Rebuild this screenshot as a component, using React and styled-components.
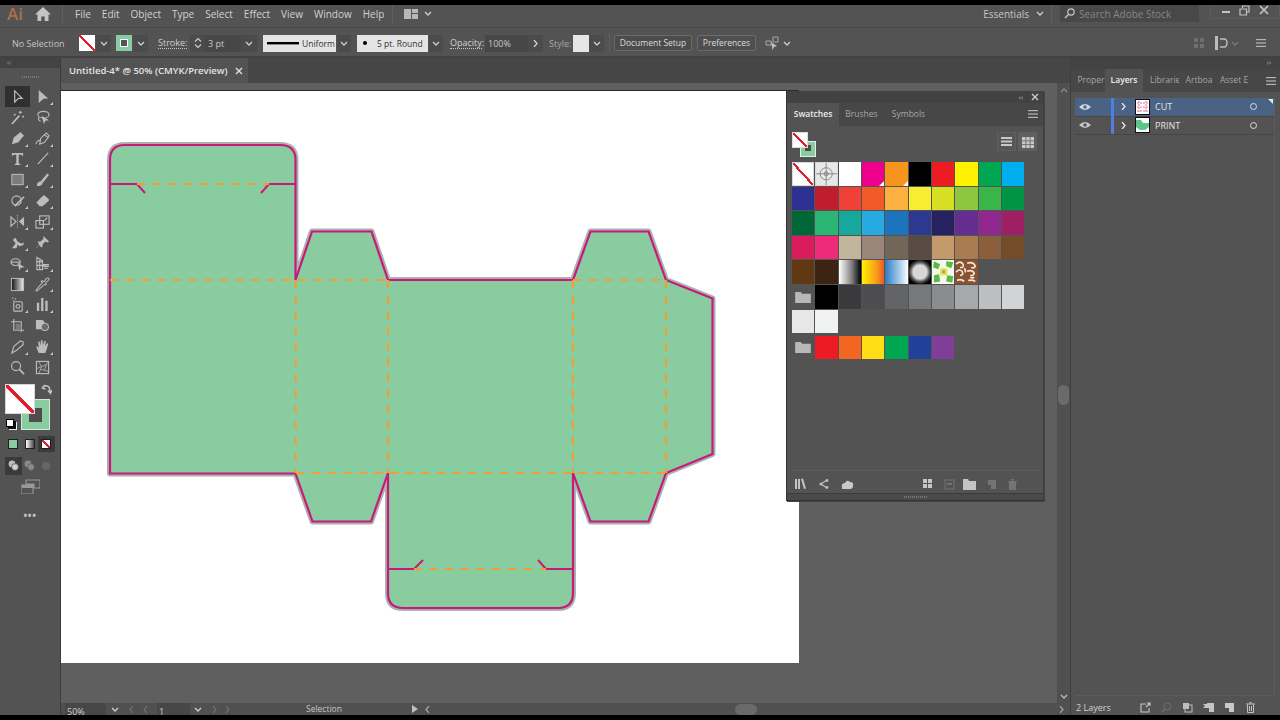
import styled, { createGlobalStyle } from "styled-components";

const GlobalStyle = createGlobalStyle`
  html, body { margin: 0; padding: 0; background: #000; overflow: hidden; }
  * { box-sizing: border-box; }
`

const noneBg = "linear-gradient(to top right, #fff calc(50% - 1.1px), #e0202c calc(50% - 1.1px) calc(50% + 1.1px), #fff calc(50% + 1.1px))"
const noneBgLarge = "linear-gradient(to top right, #fff calc(50% - 1.6px), #e0202c calc(50% - 1.6px) calc(50% + 1.6px), #fff calc(50% + 1.6px))"

const Screen = styled.div`
  width: 1280px;
  height: 720px;
  padding: 5px 0;
  display: flex;
  flex-direction: column;
  background: #000;
  overflow: hidden;
  font-family: "Open Sans", "Noto Sans", sans-serif;
  font-size: 10px;
  color: #cfcfcf;
`
const MenuBar = styled.div`
  height: 23px;
  display: flex;
  align-items: center;
  background: #535353;
  border-bottom: 1px solid #4a4a4a;
  padding-bottom: 5px;
  flex: none;
`
const AiLogo = styled.span`
  width: 35px;
  padding-left: 7px;
  font-size: 17px;
  font-weight: 600;
  color: #a9704a;
`
const MenuList = styled.div`
  display: flex;
  gap: 11px;
  margin-left: 12px;
  font-size: 10px;
  color: #d2d2d2;
`
const Divider = styled.span`
  width: 1px;
  height: ${(p) => p.$h || 18}px;
  background: #5f5f5f;
  margin-left: ${(p) => p.$ml || 0}px;
  flex: none;
`
const Push = styled.span`
  flex: 1;
`
const SearchBox = styled.div`
  width: 139px;
  height: 17px;
  margin-left: 8px;
  display: flex;
  align-items: center;
  gap: 3px;
  padding-left: 3px;
  background: #484848;
  color: #868686;
  font-size: 10px;
`
const WinButtons = styled.div`
  width: 70px;
  margin-left: 11px;
  align-self: flex-start;
  height: 14px;
  display: flex;
  align-items: center;
  justify-content: space-around;
  padding: 0 6px 3px;
  border: 1px solid #5c5c5c;
  border-top: 0;
`
const ControlBar = styled.div`
  height: 30px;
  flex: none;
  display: flex;
  align-items: center;
  background: #535353;
  border-bottom: 2px solid #414141;
  padding-top: 2px;
`
const Label = styled.span`
  margin-left: ${(p) => p.$ml || 0}px;
  margin-right: ${(p) => p.$mr || 0}px;
  padding-top: ${(p) => p.$pt || 0}px;
  width: ${(p) => (p.$w ? `${p.$w}px` : "auto")};
  color: ${(p) => p.$color || "#c4c4c4"};
  font-size: ${(p) => p.$size || 9.5}px;
  flex: none;
  white-space: nowrap;
`
const DottedLabel = styled(Label)`
  border-bottom: 1px dotted #c4c4c4;
  line-height: 11px;
  color: #d0d0d0;
`
const NoneBox = styled.span`
  width: 16px;
  height: 16px;
  margin-left: ${(p) => p.$ml || 0}px;
  background: ${noneBg};
  flex: none;
`
const StrokeBox = styled.span`
  width: 16px;
  height: 16px;
  margin-left: ${(p) => p.$ml || 0}px;
  background: #88cc9f;
  display: flex;
  align-items: center;
  justify-content: center;
  flex: none;
  &::after {
    content: "";
    width: 6px;
    height: 6px;
    border: 1px solid #fff;
    background: #555;
  }
`
const ChevBox = styled.span`
  width: ${(p) => p.$w || 15}px;
  height: 17px;
  margin-left: ${(p) => p.$ml || 0}px;
  background: #4b4b4b;
  display: flex;
  align-items: center;
  justify-content: center;
  flex: none;
`
const DarkField = styled.span`
  width: ${(p) => p.$w}px;
  height: 17px;
  margin-left: ${(p) => p.$ml || 0}px;
  background: #474747;
  color: #c8c8c8;
  font-size: 9px;
  line-height: 17px;
  padding-left: 3px;
  flex: none;
`
const LightField = styled.span`
  width: ${(p) => p.$w}px;
  height: 17px;
  margin-left: ${(p) => p.$ml || 0}px;
  background: #e4e4e4;
  color: #333;
  font-size: 8.5px;
  display: flex;
  align-items: center;
  gap: 3px;
  padding-left: ${(p) => p.$pad || 5}px;
  flex: none;
`
const StyleChip = styled.span`
  width: 16px;
  height: 17px;
  margin-left: 5px;
  background: #e6e6e6;
  flex: none;
`
const TextButton = styled.span`
  width: ${(p) => p.$w}px;
  height: 16px;
  margin-left: ${(p) => p.$ml || 0}px;
  border: 1px solid #6a6a6a;
  border-radius: 2px;
  background: ${(p) => p.$bg || "transparent"};
  color: #dcdcdc;
  font-size: 8.5px;
  line-height: 14px;
  text-align: center;
  flex: none;
`
const Workspace = styled.div`
  flex: 1;
  min-height: 0;
  display: flex;
`
const ToolPanel = styled.div`
  width: 61px;
  flex: none;
  background: #535353;
  border-right: 1px solid #3c3c3c;
  display: flex;
  flex-direction: column;
`
const ToolHead = styled.div`
  height: 10px;
  background: #434343;
  color: #a8a8a8;
  font-size: 7px;
  line-height: 9px;
  padding-left: 7px;
`
const Grip = styled.div`
  height: 18px;
  display: flex;
  justify-content: center;
  align-items: center;
  gap: 1px;
  & i {
    width: 1px;
    height: 2px;
    background: #7a7a7a;
  }
`
const ToolGrid = styled.div`
  display: grid;
  grid-template-columns: 25px 25px;
  grid-auto-rows: 20.85px;
  padding-left: 5px;
`
const ToolCell = styled.div`
  position: relative;
  display: flex;
  align-items: center;
  justify-content: center;
  background: ${(p) => (p.$active ? "#303030" : "transparent")};
  &::after {
    content: ${(p) => (p.$fly ? '""' : "none")};
    position: absolute;
    right: 2px;
    bottom: 2px;
    border-style: solid;
    border-width: 0 0 3px 3px;
    border-color: transparent transparent #c8c8c8 transparent;
  }
`
const ColorWell = styled.div`
  position: relative;
  height: 50px;
  margin-top: 6px;
  flex: none;
`
const FillSquare = styled.span`
  position: absolute;
  z-index: 1;
  left: 5px;
  top: 0;
  width: 30px;
  height: 30px;
  border: 1px solid #d8d8d8;
  background: ${noneBgLarge};
`
const StrokeSquare = styled.span`
  position: absolute;
  left: 21px;
  top: 15px;
  width: 29px;
  height: 31px;
  background: #88cc9f;
  border: 1px solid #d8e8dc;
  &::after {
    content: "";
    position: absolute;
    left: 7px;
    top: 8px;
    width: 13px;
    height: 14px;
    background: #4d4d4d;
  }
`
const SwapIcon = styled.span`
  position: absolute;
  left: 41px;
  top: 0;
`
const DefaultIcon = styled.span`
  position: absolute;
  left: 6px;
  top: 35px;
  width: 8px;
  height: 8px;
  background: #fff;
  border: 1px solid #000;
  box-shadow: 2px 2px 0 0 #111, 3px 3px 0 0 #eee;
`
const ModeRow = styled.div`
  display: flex;
  padding-left: 5px;
  height: ${(p) => p.$h || 20}px;
  margin-top: ${(p) => p.$mt || 0}px;
  align-items: center;
  flex: none;
`
const ModeCell = styled.span`
  width: 16.5px;
  height: ${(p) => p.$h || 16}px;
  display: flex;
  align-items: center;
  justify-content: center;
  background: ${(p) => (p.$on ? "#3a3a3a" : "transparent")};
`
const ModeChip = styled.span`
  width: 10px;
  height: 10px;
  border: 1px solid #1f1f1f;
  background: ${(p) => p.$bg};
`
const Center = styled.div`
  height: ${(p) => p.$h}px;
  margin-top: ${(p) => p.$mt || 0}px;
  display: flex;
  align-items: center;
  justify-content: center;
  color: #c0c0c0;
  font-size: 10px;
  font-weight: 700;
  letter-spacing: 0.5px;
  flex: none;
`
const DocArea = styled.div`
  flex: 1;
  min-width: 0;
  display: flex;
  flex-direction: column;
`
const TabRow = styled.div`
  height: 25px;
  flex: none;
  background: #464646;
  display: flex;
`
const DocTab = styled.div`
  width: 187px;
  background: #535353;
  display: flex;
  align-items: center;
  justify-content: space-between;
  padding: 0 5px 0 8px;
  color: #e4e4e4;
  font-size: 9.5px;
  font-weight: 600;
`
const CanvasRow = styled.div`
  flex: 1;
  min-height: 0;
  display: flex;
`
const Canvas = styled.div`
  flex: 1;
  position: relative;
  background: #5f5f5f;
  padding-top: 8px;
  overflow: hidden;
`
const Artboard = styled.svg`
  display: block;
  width: 738px;
  height: 572px;
  background: #fff;
  box-shadow: 0 -1px 0 #2c2c2c;
`
const VScroll = styled.div`
  width: 13px;
  flex: none;
  background: #505050;
  display: flex;
  flex-direction: column;
  align-items: center;
  justify-content: space-between;
  padding: 5px 0 4px;
  position: relative;
`
const VThumb = styled.span`
  position: absolute;
  left: 1px;
  top: 302px;
  width: 11px;
  height: 20px;
  border-radius: 6px;
  background: #6a6a6a;
`
const StatusBar = styled.div`
  height: 12px;
  flex: none;
  background: #505050;
  display: flex;
  align-items: flex-start;
  position: relative;
  overflow: hidden;
`
const StatusField = styled.span`
  width: ${(p) => p.$w}px;
  height: 16px;
  margin-left: ${(p) => p.$ml || 0}px;
  background: #474747;
  color: #cfcfcf;
  font-size: 9px;
  line-height: 17px;
  padding-left: 2px;
  flex: none;
`
const StatusIcon = styled.span`
  margin-left: ${(p) => p.$ml || 0}px;
  margin-right: ${(p) => p.$mr || 0}px;
  width: ${(p) => p.$w || 9}px;
  height: 12px;
  display: flex;
  align-items: center;
  justify-content: center;
  flex: none;
`
const HThumb = styled.span`
  position: absolute;
  left: 674px;
  top: 1px;
  width: 22px;
  height: 11px;
  border-radius: 6px;
  background: #6a6a6a;
`
const FloatPanel = styled.div`
  position: absolute;
  left: 725px;
  top: 8px;
  width: 258px;
  height: 410px;
  background: #535353;
  border-left: 1px solid #333;
  border-right: 1px solid #3e3e3e;
  border-bottom: 1px solid #333;
  display: flex;
  flex-direction: column;
  box-shadow: 1px 1px 0 #444;
`
const FloatHead = styled.div`
  height: 12px;
  flex: none;
  background: #424242;
  display: flex;
  align-items: center;
  justify-content: flex-end;
  gap: 8px;
  padding-right: 4px;
  color: #c0c0c0;
  font-size: 7px;
`
const FloatTabs = styled.div`
  height: 23px;
  flex: none;
  background: #474747;
  display: flex;
  align-items: stretch;
  padding-right: 5px;
`
const PanelTab = styled.span`
  width: ${(p) => p.$w}px;
  margin-left: ${(p) => p.$ml || 0}px;
  text-align: center;
  line-height: 22px;
  font-size: 8.5px;
  background: ${(p) => (p.$on ? "#535353" : "transparent")};
  color: ${(p) => (p.$on ? "#ececec" : "#a6a6a6")};
  font-weight: ${(p) => (p.$on ? 600 : 400)};
  white-space: nowrap;
  overflow: hidden;
  flex: none;
`
const FillStrokeMini = styled.div`
  position: relative;
  width: 26px;
  height: 30px;
`
const MiniFill = styled.span`
  position: absolute;
  z-index: 1;
  left: 0;
  top: 0;
  width: 16px;
  height: 16px;
  background: ${noneBg};
  border: 1px solid #ddd;
`
const MiniStroke = styled.span`
  position: absolute;
  left: 8px;
  top: 9px;
  width: 16px;
  height: 16px;
  background: #88cc9f;
  border: 1px solid #e4efe7;
  &::after {
    content: "";
    position: absolute;
    left: 4px;
    top: 3px;
    width: 6px;
    height: 6px;
    background: #4b4b4b;
  }
`
const SwatchTop = styled.div`
  height: 36px;
  flex: none;
  display: flex;
  align-items: flex-start;
  justify-content: space-between;
  padding: 6px 6px 0 5px;
`
const ViewButtons = styled.div`
  display: flex;
  gap: 2px;
`
const ViewButton = styled.span`
  width: 19px;
  height: 19px;
  background: ${(p) => (p.$on ? "#5f5f5f" : "#565656")};
  border: 1px solid #5f5f5f;
  display: flex;
  align-items: center;
  justify-content: center;
`
const SwatchGrid = styled.div`
  display: grid;
  grid-template-columns: repeat(10, 22.33px);
  grid-auto-rows: 23.6px;
  gap: 1px;
  margin-left: 5px;
`
const GroupGrid = styled(SwatchGrid)`
  margin-top: 2.5px;
`
const Swatch = styled.span`
  background: ${(p) => p.$bg};
  outline: ${(p) => (p.$sel ? "1px solid #d8d8d8" : "none")};
  outline-offset: -1px;
  position: relative;
  overflow: hidden;
  &::after {
    content: ${(p) => (p.$corner ? '""' : "none")};
    position: absolute;
    right: 0;
    bottom: 0;
    border-style: solid;
    border-width: 0 0 5px 5px;
    border-color: transparent transparent #fff transparent;
  }
`
const SwatchSvg = styled.svg`
  display: block;
  width: 100%;
  height: 100%;
`
const FolderCell = styled.span`
  grid-column-start: 1;
  display: flex;
  align-items: center;
  justify-content: center;
`
const FloatFoot = styled.div`
  margin-top: auto;
  height: 23px;
  flex: none;
  margin-left: 5px;
  margin-right: 3px;
  border-top: 1px solid #5b5b5b;
  display: flex;
  align-items: center;
  padding: 4px 4px 0 2px;
`
const FootIcon = styled.span`
  margin-left: ${(p) => p.$ml || 0}px;
  width: ${(p) => p.$w || 14}px;
  display: flex;
  justify-content: center;
  flex: none;
`
const FloatGrip = styled.div`
  height: 7px;
  flex: none;
  background: #4a4a4a;
  border-top: 1px solid #3c3c3c;
  display: flex;
  justify-content: center;
  gap: 1px;
  padding-top: 2px;
  & i {
    width: 1px;
    height: 2px;
    background: #777;
  }
`
const Dock = styled.div`
  width: 210px;
  flex: none;
  border-left: 1px solid #3e3e3e;
  background: #535353;
  display: flex;
  flex-direction: column;
`
const DockHead = styled.div`
  height: 11px;
  flex: none;
  background: #434343;
  color: #b8b8b8;
  font-size: 7px;
  line-height: 10px;
  text-align: right;
  padding-right: 9px;
`
const DockTabs = styled.div`
  height: 23px;
  flex: none;
  background: #474747;
  display: flex;
  padding-left: 6px;
  align-items: stretch;
  position: relative;
`
const MenuBurger = styled.span`
  position: absolute;
  right: 4px;
  top: 7px;
`
const LayerFrame = styled.div`
  flex: 1;
  margin: 6px 5px 3px 4px;
  border-bottom: 1px solid #5c5c5c;
  border-right: 1px solid #5c5c5c;
`
const LayerRow = styled.div`
  position: relative;
  height: 18.5px;
  display: flex;
  align-items: center;
  background: ${(p) => (p.$on ? "#4a6384" : "transparent")};
  border-bottom: 1px solid #464646;
  color: #e4e4e4;
  font-size: 9px;
  &::after {
    content: ${(p) => (p.$on ? '""' : "none")};
    position: absolute;
    right: 1px;
    top: 1px;
    border-style: solid;
    border-width: 0 5px 5px 0;
    border-color: transparent #e8e8e8 transparent transparent;
  }
`
const EyeSlot = styled.span`
  width: 36px;
  padding-left: 3px;
  display: flex;
  justify-content: center;
  padding-right: 20px;
  flex: none;
`
const ColorTag = styled.span`
  width: 2.5px;
  height: 18px;
  background: #4f7de0;
  flex: none;
`
const ArrowSlot = styled.span`
  width: 21.5px;
  display: flex;
  justify-content: center;
  flex: none;
`
const Thumb = styled.span`
  width: 15px;
  height: 16px;
  border: 1px solid #111;
  background: #fff;
  margin-right: 5px;
  flex: none;
`
const LayerName = styled.span`
  flex: 1;
`
const LayerTarget = styled.span`
  width: 7px;
  height: 7px;
  border: 1px solid #ddd;
  border-radius: 50%;
  margin-right: 17px;
  flex: none;
`
const DockFoot = styled.div`
  height: 16px;
  flex: none;
  display: flex;
  align-items: center;
  padding-left: 5px;
  color: #d0d0d0;
  font-size: 9px;
`
const GlyphSvg = styled.svg`
  display: block;
  flex: none;
`

const Glyph = ({ s = 16, w, h, children, box = "0 0 16 16", c = "#bcbcbc" }) => (
  <GlyphSvg width={w || s} height={h || s} viewBox={box} fill={c} stroke="none">
    {children}
  </GlyphSvg>
)

const Chev = ({ dir = "down", c = "#cfcfcf" }) => {
  const points = { down: "1,1 4,4 7,1", right: "1,0 4,3.5 1,7", left: "4,0 1,3.5 4,7", up: "1,4 4,1 7,4" }[dir]
  const vertical = dir === "down" || dir === "up"
  return (
    <GlyphSvg width="8" height={vertical ? 5 : 7} viewBox={vertical ? "0 0 8 5" : "0 0 6 7"} fill="none" stroke={c} strokeWidth="1.3">
      <polyline points={points} />
    </GlyphSvg>
  )
}

const Burger = () => (
  <Glyph s={10} box="0 0 10 10" c="#b5b5b5">
    <rect y="1" width="10" height="1.2" />
    <rect y="4.4" width="10" height="1.2" />
    <rect y="7.8" width="10" height="1.2" />
  </Glyph>
)

const line = { fill: "none", stroke: "#bcbcbc", strokeWidth: 1.2 }

const tools = [
  { active: true, g: <path d="M5 2 L13 10 L9 10 L5 14 Z" fill="none" stroke="#c4c4c4" strokeWidth="1.2" /> },
  { fly: true, g: <path d="M4 1 L14 10 L9 10.5 L4 15 Z" /> },
  { g: <g><path d="M2 15 L10 6" {...line} strokeWidth="1.8" /><path d="M11 1v3M9.5 2.5h3M14 6v2M13 7h2M5 4v2M4 5h2" {...line} /></g> },
  { g: <g><ellipse cx="9" cy="5" rx="6" ry="3.6" {...line} /><path d="M7 6 L15 11 L11 11.5 L9.5 15 Z" /><path d="M4 8 q-1 3 2 4" {...line} /></g> },
  { fly: true, g: <path d="M2 14 L4 7 L9 3 L13 7 L9 12 Z M9 3 L11 1 L15 5 L13 7 Z" /> },
  { fly: true, g: <g><path d="M1 14 q2 -6 5 -3" {...line} /><path d="M5 14 L6 8 L10 4 L14 7 L10 12 Z M10 4 L12 2 L15 5 L14 7 Z" fill="none" stroke="#bcbcbc" strokeWidth="1.1" /></g> },
  { fly: true, g: <path d="M2 2 H14 V5 H13 L12 4 H9.3 V13 L11 14 V15 H5 V14 L6.7 13 V4 H4 L3 5 H2 Z" /> },
  { fly: true, g: <path d="M3 14 L14 2" {...line} /> },
  { fly: true, g: <rect x="2" y="2.5" width="12" height="11" fill="#7c7c7c" stroke="#bcbcbc" strokeWidth="1.1" /> },
  { fly: true, g: <path d="M2 15 C2 11 4 10 6 10 L13 1.5 L15 3 L8 12 C8 14 6 15 2 15 Z" /> },
  { fly: true, g: <g><circle cx="7" cy="8" r="5" {...line} /><path d="M5 14 L15 4" {...line} strokeWidth="1.8" /></g> },
  { fly: true, g: <path d="M1.5 10 L8.5 3 Q9.5 2 10.5 3 L14.5 6.5 Q15.5 7.5 14.5 8.5 L8 14 H5 Z" /> },
  { fly: true, g: <g><path d="M1 3 L6.5 8 L1 13 Z" {...line} /><path d="M15 3 L9.5 8 L15 13 Z" /><path d="M8 1v14" {...line} strokeDasharray="1.5 1" strokeWidth="0.8" /></g> },
  { fly: true, g: <g><rect x="1" y="7" width="8" height="8" {...line} /><rect x="5" y="2" width="10" height="9" {...line} /><path d="M10 7 L13 4" {...line} /></g> },
  { fly: true, g: <path d="M2 14 L6 9 L3 5 L6 3 L8 7 L12 9 L15 8 L14 11 L10 12 L8 10 L7 14 Z" /> },
  { g: <path d="M9 1 L15 7 L13 8 L11 7 L8 10 L8 13 L6.5 13 L4 10.5 L1.5 14.5 L1 14 L4.5 9.5 L3 8 L3 7 L6 7 L9 4 Z" /> },
  { fly: true, g: <g><ellipse cx="6" cy="6.5" rx="5" ry="3.6" {...line} /><path d="M1 6.5h10" {...line} /><path d="M8 7 L15.5 12 L11.5 12.5 L10 15.5 Z" /></g> },
  { fly: true, g: <path d="M2 1.5 L8 5 V9 H15 L8 10 V14.5 H2 Z M2 6h6M2 10h6M5 3v11M9 11h6M9 13h5" {...line} /> },
  { g: <g><defs><linearGradient id="gt" x1="0" x2="1"><stop offset="0" stopColor="#111" /><stop offset="1" stopColor="#eee" /></linearGradient></defs><rect x="1.5" y="1.5" width="13" height="13" fill="url(#gt)" stroke="#c0c0c0" /></g> },
  { fly: true, g: <path d="M2 15 L1 14 L8 6 L6.5 4.5 L8 4 L10 5 L12 1.5 Q14 0.5 15 2 Q15 3 11.5 6 L12 8 L11 8.5 L10 8 Z" fill="none" stroke="#bcbcbc" strokeWidth="1.1" /> },
  { fly: true, g: <g><rect x="4" y="5" width="9" height="10" rx="1" {...line} /><circle cx="8.5" cy="10" r="2" {...line} /><path d="M2 1h1.5M5 2h1.5M3 4h1.5" {...line} /></g> },
  { fly: true, g: <path d="M2 15 V6 H4.5 V15 Z M6.5 15 V1 H9 V15 Z M11 15 V4 H13.5 V15 Z M0.5 15.5 H15.5" /> },
  { g: <g><path d="M4 1 V13 H15 M1 4 H12 V15" {...line} /><path d="M6 6 H10 L12 8 V13 H6 Z" fill="#7c7c7c" /></g> },
  { g: <g><path d="M1 2 H8 L10 4 V12 H1 Z" /><circle cx="10.5" cy="9.5" r="4" fill="#6a6a6a" stroke="#c8c8c8" /></g> },
  { fly: true, g: <path d="M2 15 L4 8 L11 2 L14 3 L14 6 L7 12 Z M2 15 L7 12" {...line} /> },
  { fly: true, g: <path d="M4 15 L1.5 9 Q1 7.8 2.3 7.8 L4 9.5 L3.5 3 Q4 2 5 3 L6 7 L6.3 1.5 Q7.2 0.5 8 1.5 L8.5 7 L10 2 Q11 1.5 11.5 2.5 L10.8 7.5 L13 4.5 Q14 4.5 14 5.5 L12.5 11 L11 15 Z" /> },
  { g: <g><circle cx="6.5" cy="6.5" r="4.8" {...line} /><path d="M10 10 L15 15" {...line} strokeWidth="1.8" /></g> },
  { g: <g><rect x="1.5" y="1.5" width="13" height="13" {...line} /><path d="M4 2 L7 7 L2 9 M7 7 L12 5 L14 2 M12 5 L10 11 L14 12 M10 11 L6 10 L4 14 M7 7 L6 10" fill="none" stroke="#bcbcbc" strokeWidth="0.8" /></g> }
]

const swatchRows = [
  ["#2e3192", "#be1e2d", "#ef4136", "#f15a29", "#fbb040", "#f9ed32", "#d7df23", "#8dc63f", "#39b54a", "#009444"],
  ["#006838", "#2bb673", "#15a89d", "#27aae1", "#1c75bc", "#2b3990", "#262262", "#662d91", "#92278f", "#9e1f63"],
  ["#da1c5c", "#ee2a7b", "#c2b59b", "#9b8579", "#726658", "#594a42", "#c49a6c", "#a97c50", "#8b5e3c", "#754c29"]
]
const grays = ["#000000", "#3a3a3c", "#4d4d4f", "#636466", "#77787b", "#8a8c8e", "#a6a8ab", "#bcbec0", "#d1d3d4"]
const brights = ["#ed1c24", "#f26522", "#ffde17", "#00a651", "#21409a", "#7f3f98"]

const Folder = () => (
  <Glyph w={16} h={12} box="0 0 17 13" c="#b8b8b8">
    <path d="M0 1 H6 L7.5 3 H17 V13 H0 Z" />
  </Glyph>
)

const RegMark = () => (
  <SwatchSvg viewBox="0 0 22 23" fill="none" stroke="#777" strokeWidth="0.8">
    <circle cx="11" cy="11.5" r="6" />
    <circle cx="11" cy="11.5" r="2" />
    <path d="M0 11.5 H22 M11 0 V23" />
  </SwatchSvg>
)

const GreenPattern = () => (
  <SwatchSvg viewBox="0 0 22 23">
    <rect width="22" height="23" fill="#f4f8ea" />
    <path d="M2 1 L8 4 L6 9 L1 7 Z M14 1 L21 2 L19 8 L14 6 Z M2 15 L7 14 L8 21 L2 22 Z M15 15 L21 16 L20 22 L14 21 Z" fill="#58b947" />
    <path d="M8 8 L15 8 L15 15 L8 15 Z" fill="#f2dc55" />
    <path d="M10 10 L13 10 L13 13 L10 13 Z" fill="#7cc242" />
  </SwatchSvg>
)

const BrownPattern = () => (
  <SwatchSvg viewBox="0 0 22 23" fill="none" stroke="#f4e8dc" strokeWidth="1.6">
    <rect width="22" height="23" fill="#8a5230" stroke="none" />
    <path d="M1 4 q4 -4 7 0 q1 4 -3 3 M12 3 q6 -2 8 3 q-2 3 -4 1 M1 12 q3 -4 6 -1 q2 4 -2 4 M12 11 q5 -2 7 2 q-1 3 -4 2 M2 20 q4 -2 7 1 M13 20 q4 -1 7 1 M9 8 q2 2 1 4 M19 17 q-2 1 -4 0" />
  </SwatchSvg>
)

const PACK = "M110 160 Q110 145 125 145 L280 145 Q295.5 145 295.5 160 L295.5 280 L312 231.5 L371.5 231.5 L388 280 L573 280 L590.5 231.5 L648.5 231.5 L666 280 L712.5 298.5 L712.5 454 L666 473 L648.5 521.5 L590.5 521.5 L573 473 L573 593 Q573 608 558 608 L403 608 Q388 608 388 593 L388 473 L371 521.5 L312.5 521.5 L295.5 473.5 L110 473.5 Z"
const FOLDS = "M110 280 H388 M573 280 H666 M295.5 280 V473 M388 280 V473 M573 280 V473 M666 280 V473 M296 473 H666 M137 184 H269 M414 569 H546"
const SLITS = "M110 184 H137 L145 193 M295.5 184 H269 L261 193 M388 569 H414 L423 560 M573 569 H546 L538 560"

function App() {
  return (
    <Screen>
      <GlobalStyle />
      <MenuBar>
        <AiLogo>Ai</AiLogo>
        <Glyph s={16} c="#c4c4c4"><path d="M8 1 L16 8.5 H13.5 V15 H9.7 V10.5 H6.3 V15 H2.5 V8.5 H0 Z" /></Glyph>
        <Divider $h={18} $ml={11} />
        <MenuList>
          {["File", "Edit", "Object", "Type", "Select", "Effect", "View", "Window", "Help"].map((m) => (
            <span key={m}>{m}</span>
          ))}
        </MenuList>
        <Divider $h={18} $ml={8} />
        <Label $ml={11}>
          <Glyph w={14} h={10} box="0 0 14 10" c="#b8b8b8"><path d="M0 0 H7 V10 H0 Z M8 0 H14 V4 H8 Z M8 5 H14 V10 H8 Z" /></Glyph>
        </Label>
        <Label $ml={6}><Chev /></Label>
        <Push />
        <Label $size={10} $color="#c4c4c4">Essentials</Label>
        <Label $ml={7}><Chev /></Label>
        <Divider $h={18} $ml={7} />
        <SearchBox>
          <Glyph s={13} box="0 0 13 13"><circle cx="8" cy="5" r="3.2" fill="none" stroke="#c4c4c4" strokeWidth="1.2" /><path d="M5.5 7.5 L2 11" stroke="#c4c4c4" strokeWidth="1.4" /></Glyph>
          Search Adobe Stock
        </SearchBox>
        <WinButtons>
          <Glyph s={10} box="0 0 10 10" c="#c4c4c4"><rect x="1" y="6" width="8" height="2" /></Glyph>
          <Glyph s={11} box="0 0 11 11"><path d="M3.5 3 V1 H10 V7 H7.5 M1 4 H7.5 V10 H1 Z" fill="none" stroke="#c4c4c4" strokeWidth="1.2" /></Glyph>
          <Glyph s={10} box="0 0 10 10"><path d="M1 1 L9 9 M9 1 L1 9" stroke="#c4c4c4" strokeWidth="1.7" /></Glyph>
        </WinButtons>
      </MenuBar>

      <ControlBar>
        <Label $ml={12} $w={67} $size={9}>No Selection</Label>
        <NoneBox />
        <ChevBox $ml={1}><Chev /></ChevBox>
        <StrokeBox $ml={5} />
        <ChevBox $ml={1}><Chev /></ChevBox>
        <DottedLabel $ml={10} $w={29} $size={9}>Stroke:</DottedLabel>
        <ChevBox $w={15} $ml={3}>
          <Glyph s={12} box="0 0 12 12"><path d="M3 4.5 L6 1.5 L9 4.5 M3 7.5 L6 10.5 L9 7.5" fill="none" stroke="#cfcfcf" strokeWidth="1.1" /></Glyph>
        </ChevBox>
        <DarkField $w={36} $ml={0}>3 pt</DarkField>
        <ChevBox $w={16}><Chev /></ChevBox>
        <LightField $w={73} $ml={6} $pad={4}>
          <Glyph w={32} h={3} box="0 0 32 3" c="#000"><rect width="32" height="2.4" /></Glyph>
          Uniform
        </LightField>
        <ChevBox $w={14} $ml={1}><Chev /></ChevBox>
        <LightField $w={71} $ml={6} $pad={5}>
          <Glyph s={6} box="0 0 6 6" c="#000"><circle cx="3" cy="3" r="2" /></Glyph>
          <Label $ml={6} $color="#333" $size={8.5}>5 pt. Round</Label>
        </LightField>
        <ChevBox $w={14} $ml={1}><Chev /></ChevBox>
        <DottedLabel $ml={7} $w={32} $size={9}>Opacity:</DottedLabel>
        <DarkField $w={43} $ml={3}>100%</DarkField>
        <ChevBox $w={15}><Chev dir="right" /></ChevBox>
        <Label $ml={6} $w={19} $color="#a8a8a8" $size={9}>Style:</Label>
        <StyleChip />
        <ChevBox $w={15}><Chev /></ChevBox>
        <Divider $h={20} $ml={5} />
        <TextButton $w={78} $ml={4} $bg="#4c4c4c">Document Setup</TextButton>
        <TextButton $w={59} $ml={5} $bg="#4f4f4f">Preferences</TextButton>
        <Label $ml={9}>
          <Glyph s={15} box="0 0 15 15"><path d="M1 5 H6 V9 H1 Z M8 1 H13 V6 H8 Z" fill="none" stroke="#aaa" /><path d="M6 6 L12 10 L9 11 L7.5 14 Z" fill="#bdbdbd" /></Glyph>
        </Label>
        <Label $ml={3}><Chev /></Label>
        <Push />
        <Glyph s={12} box="0 0 12 12" c="#6f6f6f"><path d="M1 1 H5 V5 H1 Z M7 1 H11 V5 H7 Z M1 7 H5 V11 H1 Z M7 7 H11 V11 H7 Z" /></Glyph>
        <Label $ml={9}>
          <Glyph s={14} box="0 0 14 14" c="#bdbdbd"><path d="M1 0 H4 V14 H1 Z" /><path d="M6 3 H10 Q13 3 13 7 Q13 11 10 11 H6" fill="none" stroke="#bdbdbd" strokeWidth="1.4" /></Glyph>
        </Label>
        <Label $ml={3}><Chev c="#7a7a7a" /></Label>
        <Label $ml={17} $mr={14}><Burger /></Label>
      </ControlBar>

      <Workspace>
        <ToolPanel>
          <ToolHead>‹‹</ToolHead>
          <Grip>{Array.from({ length: 9 }, (_, i) => <i key={i} />)}</Grip>
          <ToolGrid>
            {tools.map((t, i) => (
              <ToolCell key={i} $active={t.active} $fly={t.fly}>
                <Glyph s={15}>{t.g}</Glyph>
              </ToolCell>
            ))}
          </ToolGrid>
          <ColorWell>
            <StrokeSquare />
            <FillSquare />
            <SwapIcon>
              <Glyph s={11} box="0 0 11 11"><path d="M1 4 Q4 0 8 3 L9.5 8 M7 6.5 L9.5 9.5 L11 6 M1 4 L4 1 M1 4 L4.5 5" fill="none" stroke="#c4c4c4" strokeWidth="1.4" /></Glyph>
            </SwapIcon>
            <DefaultIcon />
          </ColorWell>
          <ModeRow $mt={0}>
            <ModeCell><ModeChip $bg="#88cc9f" /></ModeCell>
            <ModeCell><ModeChip $bg="linear-gradient(90deg,#fff,#444)" /></ModeCell>
            <ModeCell $on><ModeChip $bg={noneBg} /></ModeCell>
          </ModeRow>
          <ModeRow $h={20} $mt={2}>
            <ModeCell $on $h={18}><Glyph s={11} box="0 0 11 11"><circle cx="4" cy="4" r="3.4" /><circle cx="7" cy="7" r="3.4" fill="#d0d0d0" stroke="#444" strokeWidth="0.7" /></Glyph></ModeCell>
            <ModeCell $h={18}><Glyph s={11} box="0 0 11 11" c="#8a8a8a"><circle cx="4" cy="4" r="3.4" /><circle cx="7" cy="7" r="3.4" fill="#8a8a8a" stroke="#555" strokeWidth="0.7" /></Glyph></ModeCell>
            <ModeCell $h={18}><Glyph s={10} box="0 0 11 11" c="#666"><circle cx="5.5" cy="5.5" r="4.5" /></Glyph></ModeCell>
          </ModeRow>
          <Center $h={18} $mt={2}>
            <Glyph w={19} h={15} box="0 0 19 15" c="#9a9a9a"><path d="M5 1 H19 V9 H13 V5 H5 Z M0 6 H12 V15 H0 Z" fill="none" stroke="#9a9a9a" strokeWidth="1.1" /><path d="M1 6 H12 V9 H1 Z" /></Glyph>
          </Center>
          <Center $h={14} $mt={12}>•••</Center>
        </ToolPanel>

        <DocArea>
          <TabRow>
            <DocTab>
              Untitled-4* @ 50% (CMYK/Preview)
              <Glyph s={8} box="0 0 8 8"><path d="M1 1 L7 7 M7 1 L1 7" stroke="#e0e0e0" strokeWidth="1.4" /></Glyph>
            </DocTab>
          </TabRow>
          <CanvasRow>
            <Canvas>
              <Artboard viewBox="61 91 738 572">
                <path d={PACK} fill="#88cc9f" stroke="#aab2ae" strokeWidth="6" strokeLinejoin="round" />
                <path d={PACK} fill="#88cc9f" stroke="#c8197c" strokeWidth="2.2" />
                <path d={SLITS} fill="none" stroke="#c8197c" strokeWidth="2" />
                <path d={FOLDS} fill="none" stroke="#eda12f" strokeWidth="2.2" strokeDasharray="8 7.7" />
              </Artboard>
              <FloatPanel>
                <FloatHead>
                  <span>‹‹</span>
                  <Glyph s={8} box="0 0 8 8"><path d="M1 1 L7 7 M7 1 L1 7" stroke="#d0d0d0" strokeWidth="1.3" /></Glyph>
                </FloatHead>
                <FloatTabs>
                  <PanelTab $on $w={52}>Swatches</PanelTab>
                  <PanelTab $w={45}>Brushes</PanelTab>
                  <PanelTab $w={49}>Symbols</PanelTab>
                  <Push />
                  <Label $pt={6}><Burger /></Label>
                </FloatTabs>
                <SwatchTop>
                  <FillStrokeMini>
                    <MiniStroke />
                    <MiniFill />
                  </FillStrokeMini>
                  <ViewButtons>
                    <ViewButton>
                      <Glyph s={11} box="0 0 11 11" c="#c8c8c8"><path d="M0 1 H11 V3 H0 Z M0 4.5 H11 V6.5 H0 Z M0 8 H11 V10 H0 Z" /></Glyph>
                    </ViewButton>
                    <ViewButton $on>
                      <Glyph s={12} box="0 0 12 12" c="#c8c8c8"><path d="M0 1 H3.5 V4.5 H0 Z M4.3 1 H7.7 V4.5 H4.3 Z M8.5 1 H12 V4.5 H8.5 Z M0 5.3 H3.5 V8 H0 Z M4.3 5.3 H7.7 V8 H4.3 Z M8.5 5.3 H12 V8 H8.5 Z M0 8.8 H3.5 V12 H0 Z M4.3 8.8 H7.7 V12 H4.3 Z M8.5 8.8 H12 V12 H8.5 Z" /></Glyph>
                    </ViewButton>
                  </ViewButtons>
                </SwatchTop>
                <SwatchGrid>
                  <Swatch $sel $bg={noneBg} />
                  <Swatch $sel $bg="#e8e8e8"><RegMark /></Swatch>
                  <Swatch $bg="#ffffff" />
                  <Swatch $bg="#ec008c" $corner />
                  <Swatch $bg="#f7941d" $corner />
                  <Swatch $bg="#000000" />
                  <Swatch $bg="#ed1c24" />
                  <Swatch $bg="#fff200" />
                  <Swatch $bg="#00a651" />
                  <Swatch $bg="#00aeef" />
                  {swatchRows.flat().map((c, i) => <Swatch key={i} $bg={c} />)}
                  <Swatch $bg="#603913" />
                  <Swatch $bg="#3c2415" />
                  <Swatch $bg="linear-gradient(90deg,#fff,#888 55%,#000)" />
                  <Swatch $bg="linear-gradient(90deg,#fff200,#f7941d 70%,#ef5a24)" />
                  <Swatch $bg="linear-gradient(90deg,#2b7cc4,#b5d6ee 70%,#fff)" />
                  <Swatch $bg="radial-gradient(circle,#d8d8d8 0 42%,#555 60%,#000 78%)" />
                  <Swatch $bg="#fff"><GreenPattern /></Swatch>
                  <Swatch $bg="#8a5230"><BrownPattern /></Swatch>
                  <FolderCell><Folder /></FolderCell>
                  {grays.map((c) => <Swatch key={c} $bg={c} />)}
                  <Swatch $bg="#e6e7e8" />
                  <Swatch $bg="#f1f2f2" />
                </SwatchGrid>
                <GroupGrid>
                  <FolderCell><Folder /></FolderCell>
                  {brights.map((c) => <Swatch key={c} $bg={c} />)}
                </GroupGrid>
                <FloatFoot>
                  <FootIcon>
                    <Glyph s={12} box="0 0 12 12" c="#c4c4c4"><path d="M0 1 H2 V11 H0 Z M3 1 H5 V11 H3 Z M6 1 L8 0.5 L11 10.5 L9 11 Z" /></Glyph>
                  </FootIcon>
                  <FootIcon $ml={9}>
                    <Glyph s={12} box="0 0 12 12"><path d="M9 2 L3 6 L9 10" fill="none" stroke="#bdbdbd" strokeWidth="1.2" /><circle cx="3" cy="6" r="1.6" /><circle cx="9" cy="2.5" r="1.4" /><circle cx="9" cy="9.5" r="1.4" /></Glyph>
                  </FootIcon>
                  <FootIcon $ml={7} $w={16}>
                    <Glyph w={15} h={11} box="0 0 15 11" c="#c8c8c8"><path d="M3 9 Q2 4 6 4 Q8 0 11 3 Q15 3 14 7 Q14 10 11 10 H3 Z" /></Glyph>
                  </FootIcon>
                  <FootIcon $ml={67}>
                    <Glyph s={12} box="0 0 12 12" c="#c8c8c8"><path d="M1 1 H5 V5 H1 Z M6 1 H10 V5 H6 Z M1 6 H5 V10 H1 Z M6 6 H10 V10 H6 Z" /></Glyph>
                  </FootIcon>
                  <FootIcon $ml={7}>
                    <Glyph s={11} box="0 0 11 11"><rect x="1" y="1" width="9" height="9" fill="none" stroke="#747474" /><rect x="3" y="4" width="5" height="2" fill="#747474" /></Glyph>
                  </FootIcon>
                  <FootIcon $ml={6}>
                    <Glyph w={13} h={11} box="0 0 13 11" c="#c4c4c4"><path d="M0 0 H5 L6 2 H13 V11 H0 Z" /></Glyph>
                  </FootIcon>
                  <FootIcon $ml={8}>
                    <Glyph s={11} box="0 0 11 11" c="#747474"><path d="M2 1 H10 V10 H5 V6 H2 Z" /></Glyph>
                  </FootIcon>
                  <FootIcon $ml={7}>
                    <Glyph s={11} box="0 0 11 11" c="#747474"><path d="M1 2 H10 V3 H9 V11 H2 V3 H1 Z M4 0 H7 V1.5 H4 Z" /></Glyph>
                  </FootIcon>
                </FloatFoot>
                <FloatGrip>{Array.from({ length: 12 }, (_, i) => <i key={i} />)}</FloatGrip>
              </FloatPanel>
            </Canvas>
            <VScroll>
              <Chev dir="up" c="#8a8a8a" />
              <VThumb />
              <Chev c="#bdbdbd" />
            </VScroll>
          </CanvasRow>
          <StatusBar>
            <StatusField $w={41} $ml={4}>50%</StatusField>
            <StatusIcon $ml={2} $w={14}><Chev /></StatusIcon>
            <StatusIcon $ml={5}><Chev dir="left" c="#6f6f6f" /></StatusIcon>
            <StatusIcon $ml={5}><Chev dir="left" c="#6f6f6f" /></StatusIcon>
            <StatusField $w={33} $ml={7}>1</StatusField>
            <StatusIcon $ml={2} $w={12}><Chev /></StatusIcon>
            <StatusIcon $ml={6}><Chev dir="right" c="#6f6f6f" /></StatusIcon>
            <StatusIcon $ml={4}><Chev dir="right" c="#6f6f6f" /></StatusIcon>
            <Label $ml={74} $size={8.5}>Selection</Label>
            <StatusIcon $ml={69}><Glyph s={8} box="0 0 8 8" c="#c0c0c0"><path d="M1 0 L7 4 L1 8 Z" /></Glyph></StatusIcon>
            <StatusIcon $ml={4}><Chev dir="left" c="#a0a0a0" /></StatusIcon>
            <HThumb />
            <Push />
            <StatusIcon $mr={4}><Chev dir="right" c="#a0a0a0" /></StatusIcon>
          </StatusBar>
        </DocArea>

        <Dock>
          <DockHead>››</DockHead>
          <DockTabs>
            <PanelTab $w={28}>Proper</PanelTab>
            <PanelTab $on $w={38}>Layers</PanelTab>
            <PanelTab $w={29} $ml={7}>Librarie</PanelTab>
            <PanelTab $w={28} $ml={6}>Artboa</PanelTab>
            <PanelTab $w={30} $ml={6}>Asset E</PanelTab>
            <MenuBurger><Burger /></MenuBurger>
          </DockTabs>
          <LayerFrame>
            <LayerRow $on>
              <EyeSlot><Glyph w={12} h={8} box="0 0 12 8"><path d="M0 4 Q6 -2 12 4 Q6 10 0 4 Z" fill="#cfd6dc" /><circle cx="6" cy="4" r="1.7" fill="#4a6384" /></Glyph></EyeSlot>
              <ColorTag />
              <ArrowSlot><Chev dir="right" c="#e8e8e8" /></ArrowSlot>
              <Thumb>
                <SwatchSvg viewBox="0 0 13 14"><path d="M1 3 H12 M1 7 H12 M1 11 H12 M3 1 V13 M10 1 V13" stroke="#eda0b5" strokeWidth="1.6" strokeDasharray="2 1" fill="none" /></SwatchSvg>
              </Thumb>
              <LayerName>CUT</LayerName>
              <LayerTarget />
            </LayerRow>
            <LayerRow>
              <EyeSlot><Glyph w={12} h={8} box="0 0 12 8"><path d="M0 4 Q6 -2 12 4 Q6 10 0 4 Z" fill="#c8c8c8" /><circle cx="6" cy="4" r="1.7" fill="#535353" /></Glyph></EyeSlot>
              <ColorTag />
              <ArrowSlot><Chev dir="right" c="#e8e8e8" /></ArrowSlot>
              <Thumb>
                <SwatchSvg viewBox="0 0 13 14"><path d="M0 2 H5 L7 5 H13 V9 L9 12 H4 L0 9 Z" fill="#5fc488" /></SwatchSvg>
              </Thumb>
              <LayerName>PRINT</LayerName>
              <LayerTarget />
            </LayerRow>
          </LayerFrame>
          <DockFoot>
            <Label $w={63} $color="#d0d0d0" $size={9}>2 Layers</Label>
            <FootIcon $w={12}><Glyph s={11} box="0 0 11 11"><path d="M6 2 H1 V10 H9 V6 M6 5 L10 1 M7 1 H10 V4" fill="none" stroke="#c8c8c8" strokeWidth="1.1" /></Glyph></FootIcon>
            <FootIcon $ml={9} $w={12}><Glyph s={11} box="0 0 11 11"><circle cx="6.5" cy="4.5" r="3.5" fill="none" stroke="#6f6f6f" /><path d="M4 7 L1 10" stroke="#6f6f6f" strokeWidth="1.2" /></Glyph></FootIcon>
            <FootIcon $ml={9} $w={12}><Glyph s={11} box="0 0 11 11"><rect x="3" y="3" width="7" height="7" fill="none" stroke="#bdbdbd" /><rect x="1" y="1" width="6" height="6" fill="#bdbdbd" /></Glyph></FootIcon>
            <FootIcon $ml={8} $w={13}><Glyph s={12} box="0 0 12 12"><path d="M5 2 H12 V11 H7 V7 H1 L3 5 L1 3 H5 Z" fill="#c4c4c4" /></Glyph></FootIcon>
            <FootIcon $ml={9} $w={12}><Glyph s={11} box="0 0 11 11" c="#c8c8c8"><path d="M1 1 H10 V10 H5 V6 H1 Z" /></Glyph></FootIcon>
            <FootIcon $ml={9} $w={12}><Glyph s={11} box="0 0 11 11"><path d="M1 2 H10 M2.5 2.5 V10.5 H8.5 V2.5 M4 0.8 H7 M4.5 4 V9 M6.5 4 V9" fill="none" stroke="#c0c0c0" /></Glyph></FootIcon>
          </DockFoot>
        </Dock>
      </Workspace>
    </Screen>
  )
}

export default App
